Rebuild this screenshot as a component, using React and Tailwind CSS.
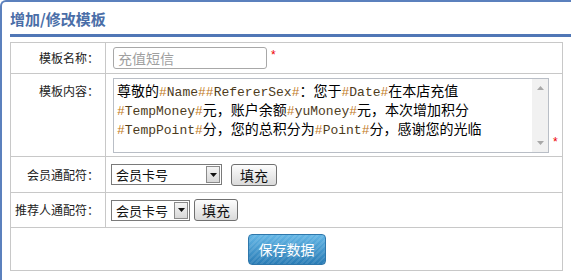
import React from "react";

const cjk = "font-['Noto_Sans_CJK_SC','Noto_Sans',sans-serif]";

// a #var# in the template, courier-style with the ClearType tint
const Var = ({name}) => (
  <span className="font-['Liberation_Mono',monospace] text-[13px]">
    <span className="text-[#c27a1e]">#</span>
    <span className="text-[#4d3b1c]">{name}</span>
    <span className="text-[#c27a1e]">#</span>
  </span>
);

const Select = ({width}) => (
  <div
    className={`flex h-[21px] items-center justify-between border border-[#7a7a7a] bg-white pl-[4px] pr-[1px] ${width}`}
  >
    <span className="text-[13px] leading-none text-[#111]">会员卡号</span>
    <span className="flex h-[17px] w-[14px] items-center justify-center border border-[#8a8a8a] bg-gradient-to-b from-[#f4f4f4] to-[#d8d8d8]">
      <svg width="7" height="4" viewBox="0 0 7 4">
        <path d="M0 0h7L3.5 4z" fill="#111" />
      </svg>
    </span>
  </div>
);

const FillBtn = ({width, className = ""}) => (
  <button
    className={`flex h-[22px] items-center justify-center rounded-[3px] border border-[#707070] bg-gradient-to-b from-[#fdfdfd] to-[#dadada] text-[14px] leading-none text-[#111] ${width} ${className}`}
  >
    填充
  </button>
);

export default function App() {
  return (
    <div
      className={`h-[280px] w-[571px] overflow-hidden rounded-tl-[6px] border-l-2 border-t-2 border-[#5b80bd] bg-white pl-2 ${cjk}`}
    >
      <h2 className="pt-[7px] text-[15px] font-bold leading-[20px] text-[#4a6ea8]">
        增加/修改模板
      </h2>
      <div className="mt-[5px] h-[3px] bg-[#5077b6]" />

      <div className="mt-[5px] w-[553px] border border-[#c8c8c8] text-[12px] text-[#222]">
        {/* name */}
        <div className="flex h-[31px] border-b border-[#c8c8c8]">
          <div className="flex w-[95px] shrink-0 items-center justify-end border-r border-[#c8c8c8] pr-[6px]">
            模板名称：
          </div>
          <div className="flex items-center pl-[7px]">
            <div className="flex h-[22px] w-[154px] items-center rounded-[3px] border border-[#a8a8a8] px-[4px] text-[14px] leading-none text-[#a0a0a0]">
              充值短信
            </div>
            <span className="mb-[6px] ml-[4px] font-['Liberation_Sans',sans-serif] text-[12px] leading-none text-[#e00]">
              *
            </span>
          </div>
        </div>

        {/* content */}
        <div className="flex h-[83px] border-b border-[#c8c8c8]">
          <div className="flex w-[95px] shrink-0 justify-end border-r border-[#c8c8c8] pr-[6px] pt-[8px]">
            模板内容：
          </div>
          <div className="flex items-end pl-[7px] pt-[4px] pb-[3px]">
            <div className="flex h-[75px] w-[436px] border border-[#b9bec6] bg-white">
              <div className="flex-1 pl-[3px] pt-[3px] text-[14px] leading-[16px] text-black">
                <div className="whitespace-nowrap">
                  尊敬的<Var name="Name" /><Var name="RefererSex" />：您于<Var name="Date" />在本店充值
                </div>
                <div className="whitespace-nowrap">
                  <Var name="TempMoney" />元，账户余额<Var name="yuMoney" />元，本次增加积分
                </div>
                <div className="whitespace-nowrap">
                  <Var name="TempPoint" />分，您的总积分为<Var name="Point" />分，感谢您的光临
                </div>
              </div>
              <div className="flex w-[16px] flex-col items-center justify-between bg-[#f1f1f1] py-[7px]">
                <svg width="7" height="4" viewBox="0 0 7 4">
                  <path d="M0 4h7L3.5 0z" fill="#a8a8a8" />
                </svg>
                <svg width="7" height="4" viewBox="0 0 7 4">
                  <path d="M0 0h7L3.5 4z" fill="#a8a8a8" />
                </svg>
              </div>
            </div>
            <span className="mb-[5px] ml-[4px] font-['Liberation_Sans',sans-serif] text-[12px] leading-none text-[#e00]">
              *
            </span>
          </div>
        </div>

        {/* member wildcard */}
        <div className="flex h-[36px] border-b border-[#c8c8c8]">
          <div className="flex w-[95px] shrink-0 items-center justify-end border-r border-[#c8c8c8] pr-[6px]">
            会员通配符：
          </div>
          <div className="flex items-center pl-[5px]">
            <Select width="w-[111px]" />
            <FillBtn width="w-[46px]" className="ml-[9px]" />
          </div>
        </div>

        {/* referrer wildcard */}
        <div className="flex h-[35px] border-b border-[#c8c8c8]">
          <div className="flex w-[95px] shrink-0 items-center justify-end border-r border-[#c8c8c8] pr-[6px]">
            推荐人通配符：
          </div>
          <div className="flex items-center pl-[5px]">
            <Select width="w-[79px]" />
            <FillBtn width="w-[44px]" className="ml-[4px]" />
          </div>
        </div>

        {/* save */}
        <div className="flex h-[42px] items-center justify-center">
          <button className="flex h-[31px] w-[78px] items-center justify-center rounded-[4px] border border-[#2f77ab] bg-[repeating-linear-gradient(135deg,rgba(255,255,255,0.1)_0px,rgba(255,255,255,0.1)_2px,transparent_2px,transparent_4px),linear-gradient(#62b5e5,#2a7cb5)] text-[14px] leading-none text-white">
            保存数据
          </button>
        </div>
      </div>
    </div>
  );
}
